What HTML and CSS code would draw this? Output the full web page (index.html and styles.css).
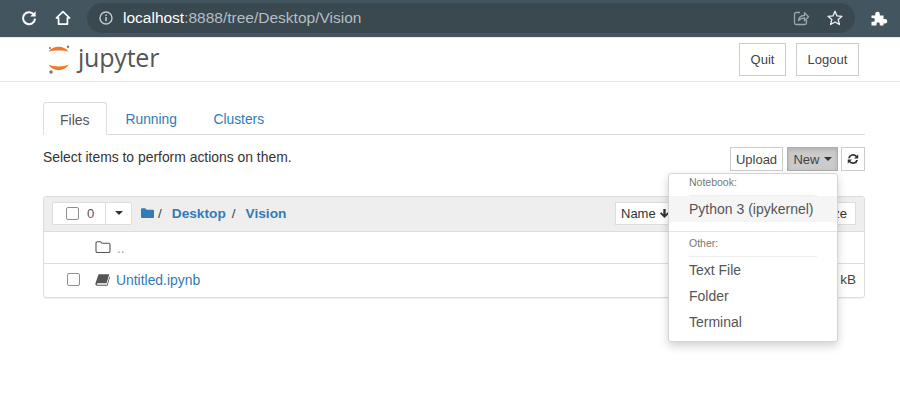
FILE: index.html
```html
<!DOCTYPE html>
<html lang="en">
<head>
<meta charset="utf-8">
<title>Vision</title>
<link rel="stylesheet" href="styles.css">
</head>
<body>
<div class="browser">
  <svg class="bicon reload" viewBox="0 0 18 18"><path d="M14.200 6.200A6 6 0 1 0 15 9.600" fill="none" stroke="#fff" stroke-width="2"/><path d="M15.600 2.200v5.400h-5.400z" fill="#fff"/></svg>
  <svg class="bicon home" viewBox="0 0 18 18"><path d="M9 2.600 2.400 9h2.200v6.200h8.800V9h2.200z" fill="none" stroke="#fff" stroke-width="1.700" stroke-linejoin="round"/></svg>
  <div class="omnibox">
    <svg class="info" viewBox="0 0 16 16"><circle cx="8" cy="8" r="6" fill="none" stroke="#c3cbcf" stroke-width="1.400"/><path d="M8 7v4.200M8 4.600v1.400" stroke="#c3cbcf" stroke-width="1.500"/></svg>
    <span class="url"><span class="host">localhost</span>:8888/tree/Desktop/Vision</span>
    <svg class="share" viewBox="0 0 18 18"><path d="M8 3.500H4.200a1.700 1.700 0 0 0-1.700 1.700v8.600a1.700 1.700 0 0 0 1.700 1.700h8.600a1.700 1.700 0 0 0 1.700-1.700V11" fill="none" stroke="#9aa7ad" stroke-width="1.300"/><path d="M6.500 11.500c.4-3.400 3-5 6-5V3.600l4 4.200-4 4V9c-2.400 0-4.400.7-6 2.500z" fill="none" stroke="#9aa7ad" stroke-width="1.300" stroke-linejoin="round"/></svg>
    <svg class="star" viewBox="0 0 18 18"><path d="m9 2.200 2 4.700 5 .4-3.800 3.300 1.200 4.900L9 13l-4.400 2.500 1.200-4.900L2 7.300l5-.4z" fill="none" stroke="#f0f3f4" stroke-width="1.300" stroke-linejoin="round"/></svg>
  </div>
  <svg class="puzzle" viewBox="0 0 18 18"><path d="M1.500 6.500h3.700V5a2.300 2.300 0 0 1 4.600 0v1.500h3.700v3.400H15a2.300 2.300 0 0 1 0 4.600h-1.500v2H9.800V15a1.700 1.700 0 0 0-3.400 0v1.500H1.500V12.800H3a1.900 1.900 0 0 0 0-3.800H1.500z" fill="#fff"/></svg>
</div>

<header class="site-header">
  <div class="logo">
    <svg class="logo-mark" viewBox="0 0 26 32">
      <path d="M3.500 8.500C8 2 19 2 23.500 8.500 19 7 8 7 3.500 8.500z" fill="#f37726"/>
      <path d="M3.500 21.500C8 29 19 29 24 21.500 19 24 8 24 3.500 21.500z" fill="#f37726"/>
      <circle cx="23" cy="3.700" r="1.200" fill="#767677"/>
      <circle cx="5" cy="5" r="1" fill="#767677"/>
      <circle cx="6" cy="29" r="1.700" fill="#767677"/>
    </svg>
    <span class="logo-text">jupyter</span>
  </div>
  <div class="header-buttons">
    <a class="btn header-btn quit">Quit</a>
    <a class="btn header-btn logout">Logout</a>
  </div>
</header>

<main class="main">
  <nav class="tabs">
    <a class="tab active">Files</a>
    <a class="tab">Running</a>
    <a class="tab">Clusters</a>
  </nav>

  <div class="toolbar">
    <span class="hint">Select items to perform actions on them.</span>
    <div class="tool-buttons">
      <a class="btn tool-btn upload">Upload</a>
      <a class="btn tool-btn new-btn">New <i class="caret"></i></a>
      <a class="btn tool-btn refresh">
        <svg viewBox="0 0 16 16"><path d="M2.300 7A5.800 5.800 0 0 1 12.400 4.300L14 2.700V7.500H9.200l1.800-1.800A3.800 3.800 0 0 0 4.400 7zM13.700 9A5.800 5.800 0 0 1 3.600 11.700L2 13.300V8.500h4.800L5 10.300A3.800 3.800 0 0 0 11.600 9z" fill="#333"/></svg>
      </a>
    </div>
    <div class="menu">
      <div class="menu-head">Notebook:</div>
      <div class="menu-rule"></div>
      <div class="menu-item hover">Python 3 (ipykernel)</div>
      <div class="menu-divider"></div>
      <div class="menu-head other">Other:</div>
      <div class="menu-rule"></div>
      <div class="menu-item">Text File</div>
      <div class="menu-item">Folder</div>
      <div class="menu-item">Terminal</div>
    </div>
  </div>

  <section class="list">
    <div class="list-head">
      <div class="select-group">
        <span class="select-count"><i class="check"></i><span class="count">0</span></span>
        <span class="select-caret"><i class="caret dark"></i></span>
      </div>
      <svg class="folder-solid" viewBox="0 0 14 12"><path d="M0 2a1.200 1.200 0 0 1 1.200-1.200h3.300L6 2.400h6.800A1.200 1.200 0 0 1 14 3.600v6.600a1.200 1.200 0 0 1-1.200 1.200H1.200A1.200 1.200 0 0 1 0 10.200z" fill="#337ab7"/></svg>
      <span class="slash first-slash">/</span>
      <a class="crumb">Desktop</a>
      <span class="slash">/</span>
      <a class="crumb">Vision</a>
      <div class="sorters">
        <span class="sort-btn name-sort">Name
          <svg class="arrow" viewBox="0 0 12 12"><path d="M6 11 1 6l1.500-1.500L4.700 6.700V1h2.600v5.700l2.200-2.200L11 6z" fill="#333"/></svg>
        </span>
        <span class="sort-btn size-sort">Size</span>
      </div>
    </div>
    <div class="row up-row">
      <svg class="folder-open" viewBox="0 0 16 14"><path d="M1 3a1.300 1.300 0 0 1 1.300-1.300h3.200l1.500 1.600h6.700A1.300 1.300 0 0 1 15 4.600v6.600a1.300 1.300 0 0 1-1.300 1.300H2.300A1.300 1.300 0 0 1 1 11.200z" fill="none" stroke="#555" stroke-width="1.100"/></svg>
      <a class="file-link up">..</a>
    </div>
    <div class="row file-row">
      <i class="check row-check"></i>
      <svg class="book" viewBox="0 0 16 14"><path d="M3.800.8h11.400l-2.900 9.700H2.700c-.9 0-1 1.500.1 1.500h9.900l2.700-8.700.6.700-2.700 9.200H2.400C.9 13.200.1 12 .5 10.500z" fill="#555"/></svg>
      <a class="file-link">Untitled.ipynb</a>
      <span class="size">kB</span>
    </div>
  </section>
</main>
</body>
</html>
```

FILE: styles.css
```css
* { box-sizing: border-box; }
html, body { margin: 0; padding: 0; }
body {
  width: 900px;
  height: 400px;
  overflow: hidden;
  background: #fff;
  color: #333;
  font-family: "Liberation Sans", Arial, sans-serif;
  font-size: 13px;
}
a { text-decoration: none; }

/* browser chrome */
.browser {
  height: 38px;
  background: #435660;
  border-bottom: 1px solid #e4e8ea;
  display: flex;
  align-items: center;
  padding: 1px 12px 2px 20px;
}
.bicon { width: 18px; height: 18px; flex: none; }
.home { margin-left: 16px; }
.omnibox {
  margin-left: 15px;
  width: 768px;
  height: 30px;
  border-radius: 15px;
  background: #3a4850;
  display: flex;
  align-items: center;
  padding: 0 10px 0 11px;
}
.info { width: 16px; height: 16px; flex: none; }
.url { margin-left: 9px; font-size: 15.500px; color: #b4bec3; flex: 1; }
.host { color: #fff; }
.share { width: 18px; height: 18px; margin-right: 16px; }
.star { width: 18px; height: 18px; margin-right: 1px; }
.puzzle { width: 18px; height: 18px; margin-left: 15px; flex: none; }

/* header */
.site-header {
  height: 44px;
  border-bottom: 1px solid #e7e7e7;
  display: flex;
  align-items: flex-start;
  justify-content: space-between;
  padding: 5px 41px 0 45px;
}
.logo { display: flex; align-items: center; height: 32px; }
.logo-mark { width: 26px; height: 32px; }
.logo-text {
  font-family: "Open Sans", sans-serif;
  font-size: 25px;
  line-height: 28px;
  color: #555;
  margin-left: 7px;
  margin-top: -4px;
  letter-spacing: -.2px;
}
.header-buttons { display: flex; gap: 10px; }
.btn {
  display: flex;
  align-items: center;
  justify-content: center;
  background: #fff;
  border: 1px solid #ccc;
  color: #333;
}
.header-btn { height: 33px; font-size: 13px; color: #444; }
.quit { width: 47px; }
.logout { width: 63px; }

/* main */
.main { padding: 20px 35px 0 43px; position: relative; }
.tabs {
  display: flex;
  height: 33px;
  border-bottom: 1px solid #ddd;
}
.tab {
  font-size: 13.800px;
  color: #337ab7;
  padding: 9px 16px 0;
  margin-right: 4px;
  height: 33px;
  border: 1px solid transparent;
}
.tab.active {
  font-size: 14px;
  color: #555;
  background: #fff;
  border-color: #ddd #ddd #fff;
  border-radius: 3px 3px 0 0;
}
.tab:nth-child(2) { padding: 9px 18px 0 14px; margin-right: 0; }
.tab:nth-child(3) { padding: 9px 16px 0 16.500px; }

.toolbar {
  position: relative;
  height: 61px;
  padding-top: 12px;
  display: flex;
  justify-content: space-between;
  align-items: flex-start;
}
.hint { font-size: 13.900px; line-height: 20px; color: #333; }
.tool-buttons { display: flex; gap: 3px; }
.tool-btn { height: 24px; font-size: 13px; padding: 0 5px; color: #444; }
.upload { width: 53px; padding: 0; }
.new-btn {
  background: #cbcbcb;
  border-color: #adadad;
  box-shadow: inset 0 2px 4px rgba(0,0,0,.125);
  margin-left: 1px;
  width: 51px;
  gap: 4px;
}
.refresh { width: 24px; padding: 0; }
.refresh svg { width: 14px; height: 14px; }
.caret {
  display: inline-block;
  width: 0;
  height: 0;
  border-top: 4px solid #333;
  border-left: 4px solid transparent;
  border-right: 4px solid transparent;
}
.menu {
  position: absolute;
  z-index: 5;
  left: 625px;
  top: 38px;
  width: 170px;
  height: 169px;
  background: #fff;
  border: 1px solid #d5d5d5;
  border-radius: 3px;
  box-shadow: 0 4px 10px rgba(0,0,0,.18);
  color: #555;
}
.menu-head {
  font-size: 10.500px;
  line-height: 14px;
  color: #777;
  padding: 1px 0 0 20px;
  height: 21px;
}
.menu-head.other { height: 24px; padding-top: 4px; }
.menu-rule { height: 1px; background: #eee; margin: 0 20px; }
.menu-item {
  font-size: 14px;
  line-height: 26px;
  height: 26px;
  padding-left: 20px;
  white-space: nowrap;
}
.menu-item.hover { background: #f5f5f5; }
.menu-divider { height: 1px; background: #e5e5e5; margin-top: 9px; }

/* file list */
.list {
  border: 1px solid #ddd;
  border-radius: 3px;
  height: 102px;
  box-shadow: 0 1px 1px rgba(0,0,0,.05);
}
.list-head {
  height: 35px;
  background: #eee;
  border-bottom: 1px solid #ddd;
  display: flex;
  align-items: center;
  padding: 0 8px 2px;
}
.select-group {
  display: flex;
  height: 23px;
  background: #fff;
  border: 1px solid #ddd;
  border-radius: 2px;
}
.select-count {
  width: 53px;
  display: flex;
  align-items: center;
  padding-left: 13px;
  gap: 8px;
  border-right: 1px solid #ddd;
}
.count { font-size: 13px; color: #555; }
.select-caret { width: 25px; display: flex; align-items: center; justify-content: center; }
.check {
  display: inline-block;
  width: 13px;
  height: 13px;
  background: #fff;
  border: 1px solid #8f8f8f;
  border-radius: 2px;
}
.folder-solid { width: 13px; height: 12px; margin-left: 9px; }
.slash { font-size: 13.500px; color: #444; margin: 0 9px 0 5px; }
.slash.first-slash { margin: 0 10px 0 4px; }
.crumb { font-size: 13.700px; font-weight: bold; color: #337ab7; }
.crumb + .slash { margin-left: 6px; margin-right: 10px; }
.sorters { margin-left: auto; display: flex; position: relative; }
.sort-btn {
  height: 23px;
  display: flex;
  align-items: center;
  background: #fff;
  border: 1px solid #ddd;
  font-size: 13px;
  color: #333;
  white-space: nowrap;
}
.name-sort { width: 70px; padding-left: 5px; gap: 3px; }
.arrow { width: 11px; height: 11px; flex: none; }
.size-sort { width: 171px; justify-content: flex-end; padding-right: 8px; }
.row {
  height: 32px;
  display: flex;
  align-items: center;
  padding-bottom: 1px;
}
.up-row { border-bottom: 1px solid #ddd; }
.folder-open { width: 16px; height: 14px; margin-left: 51px; }
.file-link { font-size: 13.900px; color: #337ab7; margin-left: 6px; }
.up { color: #8aa9c6; padding-top: 2px; }
.row-check { margin-left: 23px; }
.book { width: 15px; height: 14px; margin-left: 15px; }
.size { margin-left: auto; margin-right: 8px; font-size: 13.500px; color: #444; }
```
